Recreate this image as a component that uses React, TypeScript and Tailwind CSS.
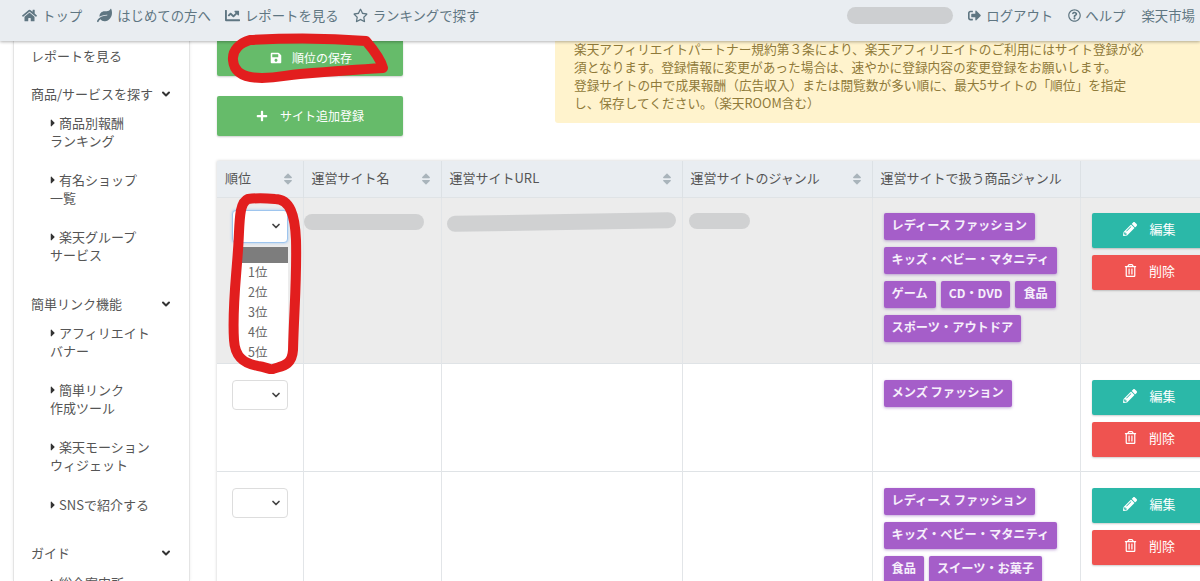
import { ChevronDown } from "lucide-react"
import {
  FaCaretRight,
  FaChartLine,
  FaHome,
  FaLeaf,
  FaPencilAlt,
  FaPlus,
  FaRegQuestionCircle,
  FaRegStar,
  FaRegTrashAlt,
  FaSave,
  FaSignOutAlt,
  FaSort,
} from "react-icons/fa"

const font = "font-['Noto_Sans_CJK_JP','Noto_Sans',sans-serif]"

const sideGroups = [
  {
    title: "商品/サービスを探す",
    gap: "mt-[20px]",
    items: [
      ["商品別報酬", "ランキング"],
      ["有名ショップ", "一覧"],
      ["楽天グループ", "サービス"],
    ],
  },
  {
    title: "簡単リンク機能",
    gap: "mt-[10px]",
    items: [
      ["アフィリエイト", "バナー"],
      ["簡単リンク", "作成ツール"],
      ["楽天モーション", "ウィジェット"],
      ["SNSで紹介する"],
    ],
  },
  { title: "ガイド", gap: "mt-[10px]", items: [["総合案内所"]] },
]

const rows = [
  {
    bg: "bg-[#ececec]",
    h: "h-[166px]",
    pt: "pt-[15px]",
    selectPt: "pt-[12px]",
    tags: [
      ["レディース ファッション"],
      ["キッズ・ベビー・マタニティ"],
      ["ゲーム", "CD・DVD", "食品"],
      ["スポーツ・アウトドア"],
    ],
  },
  { bg: "bg-white", h: "h-[108px]", pt: "pt-[16px]", selectPt: "pt-[16px]", tags: [["メンズ ファッション"]] },
  {
    bg: "bg-white",
    h: "h-[110px]",
    pt: "pt-[16px]",
    selectPt: "pt-[16px]",
    tags: [["レディース ファッション"], ["キッズ・ベビー・マタニティ"], ["食品", "スイーツ・お菓子"]],
  },
]

function Sidebar() {
  return (
    <aside className="ml-[13px] h-[540px] w-[177px] shrink-0 overflow-hidden border-x border-[#e4e4e4] bg-white pl-[17px] pt-[6px] text-[13px] leading-[18px] text-[#555] shadow-[0_0_3px_rgba(0,0,0,0.08)]">
      <p>レポートを見る</p>
      {sideGroups.map((group) => (
        <div key={group.title} className={group.gap}>
          <div className="flex w-[141px] items-center justify-between">
            <span>{group.title}</span>
            <ChevronDown className="h-3 w-3 text-[#333]" strokeWidth={4} />
          </div>
          <ul className="ml-[18px] mt-[11px]">
            {group.items.map((lines) => (
              <li key={lines[0]} className={lines[1] ? "pb-[21px]" : "pb-[20px] pt-px"}>
                <div className="flex items-center">
                  <FaCaretRight className="h-3 w-2 text-[#333]" />
                  <span className="ml-[2px]">{lines[0]}</span>
                </div>
                {lines[1] && <div className="ml-px">{lines[1]}</div>}
              </li>
            ))}
          </ul>
        </div>
      ))}
    </aside>
  )
}

function Header() {
  const left = [
    [FaHome, "トップ", "ml-[22px]", "mr-[15px]"],
    [FaLeaf, "はじめての方へ", "", "mr-[14px]"],
    [FaChartLine, "レポートを見る", "", "mr-[14px]"],
    [FaRegStar, "ランキングで探す", "", ""],
  ] as const
  return (
    <header className="absolute left-0 top-0 z-20 flex h-[41px] w-full items-center bg-[#e9edf1] pb-[10px] text-[13.4px] text-[#5f7682] shadow-[0_1px_3px_rgba(0,0,0,0.3)]">
      {left.map(([Icon, label, ml, mr]) => (
        <a key={label} className={`flex items-center gap-[5px] ${ml} ${mr}`}>
          <Icon className="h-[15px] w-[15px]" />
          {label}
        </a>
      ))}
      <div className="ml-auto flex items-center pr-[5px]">
        <div className="mr-[15px] h-[17px] w-[106px] rounded-full bg-[#cdcfd1]" />
        <a className="mr-[15px] flex items-center gap-[5px]">
          <FaSignOutAlt className="h-[13px] w-[13px]" />
          ログアウト
        </a>
        <a className="mr-[16px] flex items-center gap-[4px]">
          <FaRegQuestionCircle className="h-[13px] w-[13px]" />
          ヘルプ
        </a>
        <a>楽天市場</a>
      </div>
    </header>
  )
}

function SelectBox({ open }: { open?: boolean }) {
  return (
    <div
      className={`flex w-[56px] items-center justify-end rounded-[4px] border bg-white pr-[5px] ${
        open ? "h-[33px] border-[#9ec5ee] shadow-[0_0_3px_#9ec5ee]" : "h-[30px] border-[#ddd]"
      }`}
    >
      <ChevronDown className="h-3 w-3 text-[#444]" strokeWidth={3.5} />
    </div>
  )
}

function Th({ label, sort, className }: { label: string; sort?: boolean; className: string }) {
  return (
    <th className={`h-[36px] border-r border-[#dce1e5] px-2 pb-[3px] text-left text-[13px] font-normal text-[#555] ${className}`}>
      <div className="flex items-center justify-between">
        <span>{label}</span>
        {sort && <FaSort className="mt-[3px] h-[14px] w-[14px] text-[#a9b4bb]" />}
      </div>
    </th>
  )
}

function Tag({ label }: { label: string }) {
  return (
    <span className="rounded-[2px] bg-[#a55ec9] px-2 pb-[5px] pt-[3px] text-[12.2px] font-bold leading-[19px] text-[#f6effb] shadow-[0_1px_3px_rgba(120,60,170,0.45)]">
      {label}
    </span>
  )
}

function ActionButton({ edit }: { edit?: boolean }) {
  return (
    <button
      className={`flex h-[35px] w-[116px] items-center justify-center gap-3 rounded-[2px] pb-[3px] text-[13px] text-white shadow-[0_1px_2px_rgba(0,0,0,0.2)] ${
        edit ? "bg-[#2bb8a8]" : "bg-[#ef5350]"
      }`}
    >
      {edit ? <FaPencilAlt className="h-[14px] w-[14px]" /> : <FaRegTrashAlt className="h-[13px] w-[13px]" />}
      {edit ? "編集" : "削除"}
    </button>
  )
}

function RankTable() {
  return (
    <div className="ml-[27px] mt-[25px] w-[1063px] shadow-[0_0_3px_rgba(0,0,0,0.2)]">
      <table className="w-[1063px] table-fixed border-collapse">
        <thead>
          <tr className="bg-[#e9edf1]">
            <Th label="順位" sort className="w-[86px]" />
            <Th label="運営サイト名" sort className="w-[138px]" />
            <Th label="運営サイトURL" sort className="w-[241px]" />
            <Th label="運営サイトのジャンル" sort className="w-[190px]" />
            <Th label="運営サイトで扱う商品ジャンル" className="w-[208px]" />
            <Th label="" className="w-[200px]" />
          </tr>
        </thead>
        <tbody>
          {rows.map((row, i) => (
            <tr key={i} className={`${row.bg} ${row.h} border-t border-[#dfe3e6] align-top`}>
              <td className={`relative border-r border-[#e2e5e8] pl-[15px] ${row.selectPt}`}>
                <SelectBox open={i === 0} />
                {i === 0 && (
                  <ul className="absolute left-[21px] top-[49px] z-10 w-[50px] bg-white pb-[1px] text-[12.5px] leading-[20px] text-[#666]">
                    <li className="h-[16px] bg-[#7d7d7d]" />
                    {["1位", "2位", "3位", "4位", "5位"].map((o, j) => (
                      <li key={o} className={`pl-[10px] ${j === 0 ? "mt-[-1px]" : ""}`}>
                        {o}
                      </li>
                    ))}
                  </ul>
                )}
              </td>
              <td className="border-r border-[#e2e5e8] pt-[16px]">
                {i === 0 && <div className="h-[16px] w-[120px] rounded-full bg-[#d0d1d2]" />}
              </td>
              <td className="border-r border-[#e2e5e8] pl-[5px] pt-[16px]">
                {i === 0 && <div className="h-[16px] w-[229px] -rotate-[1deg] rounded-full bg-[#d0d1d2]" />}
              </td>
              <td className="border-r border-[#e2e5e8] pl-[6px] pt-[15px]">
                {i === 0 && <div className="h-[16px] w-[61px] rounded-full bg-[#d0d1d2]" />}
              </td>
              <td className={`border-r border-[#e2e5e8] pl-[11px] ${row.pt}`}>
                <div className="flex flex-col gap-[7px]">
                  {row.tags.map((line) => (
                    <div key={line[0]} className="flex gap-[5px]">
                      {line.map((t) => (
                        <Tag key={t} label={t} />
                      ))}
                    </div>
                  ))}
                </div>
              </td>
              <td className={`pl-[11px] ${row.pt}`}>
                <div className="flex flex-col gap-[7px]">
                  <ActionButton edit />
                  <ActionButton />
                </div>
              </td>
            </tr>
          ))}
        </tbody>
      </table>
    </div>
  )
}

export default function App() {
  return (
    <div className={`relative h-[581px] w-[1200px] overflow-hidden bg-white ${font}`}>
      <Header />
      <div className="flex pt-[41px]">
        <Sidebar />
        <main className="min-w-0 flex-1">
          <div className="flex items-start">
            <div className="ml-[27px] flex w-[186px] flex-col gap-[20px]">
              <button className="flex h-[35px] items-center justify-center gap-[10px] rounded-b-[2px] bg-[#66bb6a] pb-[2px] pl-[2px] text-[12px] text-white shadow-[0_1px_2px_rgba(0,0,0,0.2)]">
                <FaSave className="h-3 w-3" />
                順位の保存
              </button>
              <button className="flex h-[40px] items-center justify-center gap-[12px] rounded-[2px] bg-[#66bb6a] pb-px text-[12px] text-white shadow-[0_1px_2px_rgba(0,0,0,0.2)]">
                <FaPlus className="h-3 w-3" />
                サイト追加登録
              </button>
            </div>
            <div className="ml-[152px] h-[82px] flex-1 rounded-bl-[3px] bg-[#fff3cd] pl-[19px] text-[12.7px] leading-[18px] text-[#8f7a3a]">
              <p className="-mt-px">
                楽天アフィリエイトパートナー規約第３条により、楽天アフィリエイトのご利用にはサイト登録が必
                <br />
                須となります。登録情報に変更があった場合は、速やかに登録内容の変更登録をお願いします。
                <br />
                登録サイトの中で成果報酬（広告収入）または閲覧数が多い順に、最大5サイトの「順位」を指定
                <br />
                し、保存してください。（楽天ROOM含む）
              </p>
            </div>
          </div>
          <RankTable />
        </main>
      </div>

      {/* red marker scribbles drawn over the screenshot */}
      <svg className="pointer-events-none absolute left-0 top-0 z-30 h-[581px] w-[1200px]" viewBox="0 0 1200 581" fill="none">
        <path
          d="M250 40 C240 43 232 50 233 60 C234 72 243 78 262 78 C280 78 285 75 300 74 C325 72 350 70 383 68 C381 60 372 48 366 41 C330 38 285 38 250 40 Z"
          stroke="#e21e1e"
          strokeWidth="10"
          strokeLinejoin="round"
        />
        <path
          d="M248 199 C238 203 240 225 238 250 C236 280 232 310 234 340 C235 358 245 364 258 366 C266 367 270 370 273 369 C280 366 292 367 293 350 C294 310 297 280 296 240 C295 215 290 199 275 199 C265 198 255 198 248 199 Z"
          stroke="#e21e1e"
          strokeWidth="10"
          strokeLinejoin="round"
        />
      </svg>
    </div>
  )
}
